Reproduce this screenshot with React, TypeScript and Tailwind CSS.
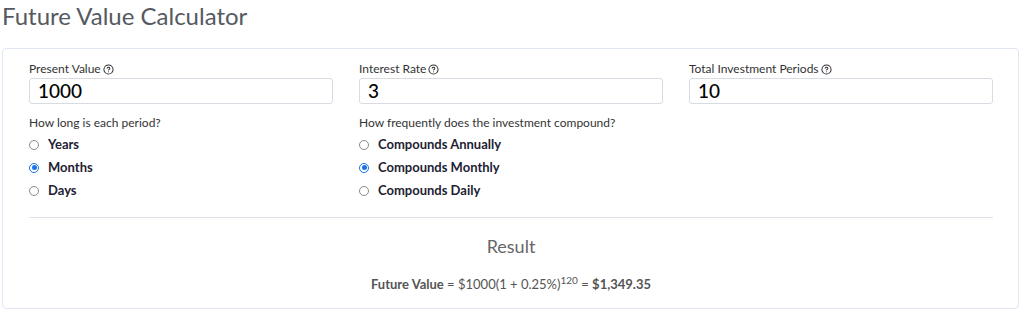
import React, { useState } from 'react';
import { CircleHelp } from 'lucide-react';

const periodOptions = ['Years', 'Months', 'Days'];
const compoundOptions = ['Compounds Annually', 'Compounds Monthly', 'Compounds Daily'];

const Field = ({ label, value }: { label: string; value: string }) => (
  <div>
    <div className="flex items-center gap-[2px] text-[12px] leading-[14px] text-[#333]">
      <span>{label}</span>
      <CircleHelp size={11} strokeWidth={2.2} className="text-[#333]" />
    </div>
    <input
      readOnly
      value={value}
      className="mt-[2px] block w-full h-[26px] px-[8px] border border-[#d6dce2] rounded-[3px] text-[19px] font-medium text-black outline-none"
    />
  </div>
);

const RadioGroup = ({
  question,
  options,
  selected,
  onChange,
}: {
  question: string;
  options: string[];
  selected: string;
  onChange: (v: string) => void;
}) => (
  <div className="mt-[12px]">
    <div className="text-[12px] leading-[14px] text-[#333]">{question}</div>
    <div className="mt-[3px]">
      {options.map((opt) => (
        <label key={opt} className="flex items-center h-[23px] cursor-pointer">
          <span
            className={`w-[10px] h-[10px] rounded-full border flex items-center justify-center ${
              selected === opt ? 'border-[#1a73e8]' : 'border-[#8a8a8a]'
            }`}
            onClick={() => onChange(opt)}
          >
            {selected === opt && <span className="w-[5px] h-[5px] rounded-full bg-[#1a73e8]" />}
          </span>
          <span className="ml-[9px] text-[13px] font-bold text-[#1e2233]">{opt}</span>
        </label>
      ))}
    </div>
  </div>
);

export default function App() {
  const [period, setPeriod] = useState('Months');
  const [compound, setCompound] = useState('Compounds Monthly');

  return (
    <div className="bg-white font-['Lato',sans-serif] pl-[2px] pr-[5px]">
      <h1 className="pt-[1px] text-[24px] leading-[29px] text-[#555a60] font-normal">Future Value Calculator</h1>

      <div className="mt-[18px] border border-[#e0e6f2] rounded-[4px] pt-[13px] pl-[26px] pr-[25px] pb-[16px]">
        <div className="grid grid-cols-3 gap-x-[26px]">
          <div>
            <Field label="Present Value" value="1000" />
            <RadioGroup question="How long is each period?" options={periodOptions} selected={period} onChange={setPeriod} />
          </div>
          <div>
            <Field label="Interest Rate" value="3" />
            <RadioGroup
              question="How frequently does the investment compound?"
              options={compoundOptions}
              selected={compound}
              onChange={setCompound}
            />
          </div>
          <div>
            <Field label="Total Investment Periods" value="10" />
          </div>
        </div>

        <div className="mt-[15px] border-t border-[#dde3e8]" />

        <div className="mt-[17px] text-center text-[18px] leading-[22px] text-[#666]">Result</div>
        <div className="mt-[20px] text-center text-[13px] leading-[15px] text-[#555]">
          <span className="font-bold">Future Value</span> = $1000(1 + 0.25%)
          <sup className="text-[10px]">120</sup> = <span className="font-bold">$1,349.35</span>
        </div>
      </div>
    </div>
  );
}
